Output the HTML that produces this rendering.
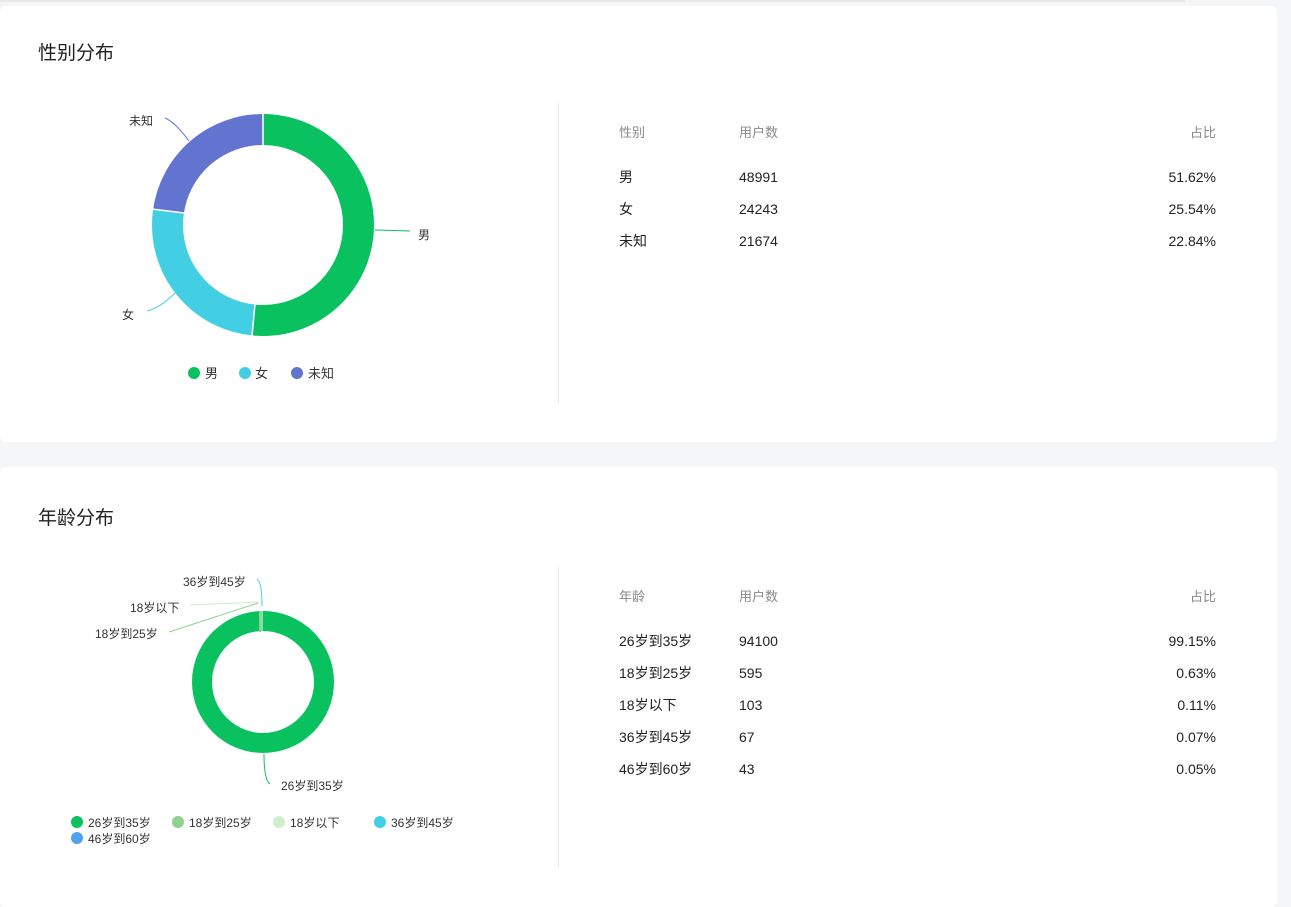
<!DOCTYPE html>
<html><head><meta charset="utf-8"><style>
body{margin:0;width:1291px;height:907px;background:#f5f6f8;font-family:"Liberation Sans","Noto Sans CJK SC",sans-serif;position:relative;overflow:hidden;color:#222}
.topline{position:absolute;left:0;top:0;width:1185px;height:2px;background:#e8e8e8}
.card{position:absolute;left:0;width:1277px;background:#fff;border-radius:6px}
.title{position:absolute;left:38px;font-size:19px;color:#222;line-height:24px}
.vline{position:absolute;left:558px;width:1px;background:#e8e8e8}
.t{position:absolute;font-size:14px;color:#222;line-height:16px}
.h{color:#888;font-size:13px}
.r{text-align:right;width:200px}
svg{position:absolute;left:0;top:0}
</style></head><body>
<div class="topline"></div>
<div class="card" style="top:6px;height:436px"></div>
<div class="card" style="top:467px;height:440px"></div>
<div class="title" style="top:42px">性别分布</div>
<div class="title" style="top:507px">年龄分布</div>
<div class="vline" style="top:103px;height:300px"></div>
<div class="vline" style="top:567px;height:300px"></div>

<div class="t h" style="left:619px;top:125px">性别</div>
<div class="t h" style="left:739px;top:125px">用户数</div>
<div class="t h r" style="left:1016px;top:125px">占比</div>
<div class="t" style="left:619px;top:169px">男</div><div class="t" style="left:739px;top:169px">48991</div><div class="t r" style="left:1016px;top:169px">51.62%</div>
<div class="t" style="left:619px;top:201px">女</div><div class="t" style="left:739px;top:201px">24243</div><div class="t r" style="left:1016px;top:201px">25.54%</div>
<div class="t" style="left:619px;top:233px">未知</div><div class="t" style="left:739px;top:233px">21674</div><div class="t r" style="left:1016px;top:233px">22.84%</div>

<div class="t h" style="left:619px;top:589px">年龄</div>
<div class="t h" style="left:739px;top:589px">用户数</div>
<div class="t h r" style="left:1016px;top:589px">占比</div>
<div class="t" style="left:619px;top:633px">26岁到35岁</div><div class="t" style="left:739px;top:633px">94100</div><div class="t r" style="left:1016px;top:633px">99.15%</div>
<div class="t" style="left:619px;top:665px">18岁到25岁</div><div class="t" style="left:739px;top:665px">595</div><div class="t r" style="left:1016px;top:665px">0.63%</div>
<div class="t" style="left:619px;top:697px">18岁以下</div><div class="t" style="left:739px;top:697px">103</div><div class="t r" style="left:1016px;top:697px">0.11%</div>
<div class="t" style="left:619px;top:729px">36岁到45岁</div><div class="t" style="left:739px;top:729px">67</div><div class="t r" style="left:1016px;top:729px">0.07%</div>
<div class="t" style="left:619px;top:761px">46岁到60岁</div><div class="t" style="left:739px;top:761px">43</div><div class="t r" style="left:1016px;top:761px">0.05%</div>

<svg width="1291" height="907" font-family="Liberation Sans, Noto Sans CJK SC, sans-serif" font-size="12" fill="#333">
<g transform="rotate(-90 263 225)">
<circle cx="263" cy="225" r="95.5" fill="none" stroke="#09c15f" stroke-width="31" stroke-dasharray="309.7 600"/>
<circle cx="263" cy="225" r="95.5" fill="none" stroke="#43cfe3" stroke-width="31" stroke-dasharray="0 309.7 153.3 600"/>
<circle cx="263" cy="225" r="95.5" fill="none" stroke="#6274cf" stroke-width="31" stroke-dasharray="0 463 137.1 600"/>
</g>
<line x1="263" y1="113" x2="263" y2="146" stroke="#fff" stroke-width="1.5"/>
<line x1="252" y1="336" x2="255" y2="304" stroke="#fff" stroke-width="1.5"/>
<line x1="152" y1="209" x2="184" y2="213" stroke="#fff" stroke-width="1.5"/>
<path d="M375 230 L410 231" stroke="#09c15f" fill="none"/>
<path d="M175 293 Q160 308 147 311" stroke="#43cfe3" fill="none"/>
<path d="M165 118 Q175 122 189 141" stroke="#6274cf" fill="none"/>
<text x="418" y="239">男</text><text x="122" y="319">女</text><text x="129" y="125">未知</text>
<circle cx="194" cy="373" r="6" fill="#09c15f"/><text x="205" y="378" font-size="13">男</text>
<circle cx="245" cy="373" r="6" fill="#43cfe3"/><text x="255" y="378" font-size="13">女</text>
<circle cx="297" cy="373" r="6" fill="#6274cf"/><text x="308" y="378" font-size="13">未知</text>

<circle cx="263" cy="682" r="61" fill="none" stroke="#09c15f" stroke-width="20"/>
<line x1="260" y1="611" x2="260" y2="632" stroke="#8fd18e" stroke-width="2"/>
<line x1="262" y1="611" x2="262" y2="632" stroke="#fff" stroke-width="1"/>
<path d="M169 632 L258 603" stroke="#8fd18e" fill="none"/>
<path d="M190 605 L259 602" stroke="#cdeecf" fill="none"/>
<path d="M257 579 Q262 582 262 606" stroke="#43cfe3" fill="none"/>
<path d="M264 754 Q264 780 270 784" stroke="#09c15f" fill="none"/>
<text x="183" y="586">36岁到45岁</text><text x="130" y="612">18岁以下</text><text x="95" y="638">18岁到25岁</text><text x="281" y="790">26岁到35岁</text>
<circle cx="77" cy="822" r="6" fill="#09c15f"/><text x="88" y="827">26岁到35岁</text>
<circle cx="178" cy="822" r="6" fill="#8fd18e"/><text x="189" y="827">18岁到25岁</text>
<circle cx="279" cy="822" r="6" fill="#cdeecf"/><text x="290" y="827">18岁以下</text>
<circle cx="380" cy="822" r="6" fill="#43cfe3"/><text x="391" y="827">36岁到45岁</text>
<circle cx="77" cy="838" r="6" fill="#4fa3ea"/><text x="88" y="843">46岁到60岁</text>
</svg>
</body></html>
